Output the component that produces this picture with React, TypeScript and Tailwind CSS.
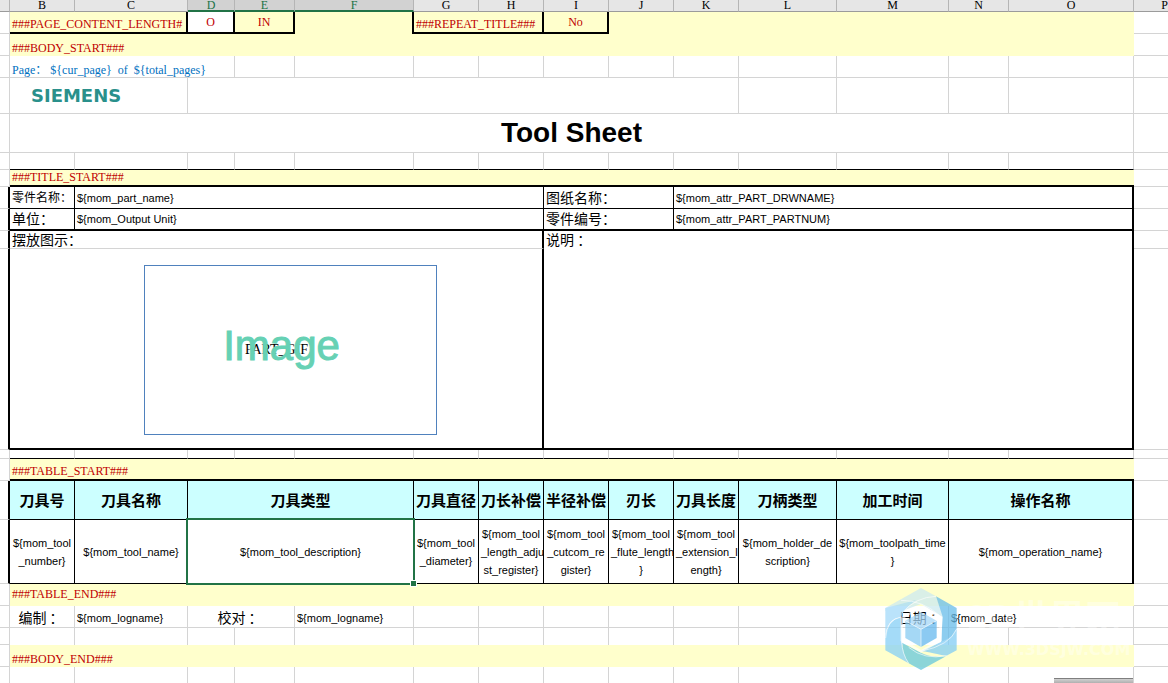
import type { ReactNode } from "react";

const GRID = "border-[#d4d4d4]";
const SERIF = "font-['Liberation_Serif','Noto_Sans_CJK_SC',serif]";
const TAG = `${SERIF} bg-[#ffffcc] pl-[2px] text-left text-[12px] text-[#c00000]`;
const FIELD = "px-[2px] font-['Liberation_Sans',sans-serif] text-[11px] leading-[18px] text-black";
const LABEL = "pl-[2px] font-['Noto_Sans_CJK_SC',sans-serif] font-normal text-black";
const CENTER = `${FIELD} border-r border-b border-black text-center`;

const columns = [
  { name: "", width: "w-[10px]" },
  { name: "B", width: "w-[65px]" },
  { name: "C", width: "w-[113px]" },
  { name: "D", width: "w-[47px]", selected: true },
  { name: "E", width: "w-[60px]", selected: true },
  { name: "F", width: "w-[119px]", selected: true },
  { name: "G", width: "w-[65px]" },
  { name: "H", width: "w-[65px]" },
  { name: "I", width: "w-[65px]" },
  { name: "J", width: "w-[65px]" },
  { name: "K", width: "w-[65px]" },
  { name: "L", width: "w-[98px]" },
  { name: "M", width: "w-[112px]" },
  { name: "N", width: "w-[60px]" },
  { name: "O", width: "w-[125px]" },
  { name: "P", width: "" },
];

const toolHeads = [
  { text: "刀具号", span: 1 },
  { text: "刀具名称", span: 1 },
  { text: "刀具类型", span: 3 },
  { text: "刀具直径", span: 1 },
  { text: "刀长补偿", span: 1 },
  { text: "半径补偿", span: 1 },
  { text: "刃长", span: 1 },
  { text: "刀具长度", span: 1 },
  { text: "刀柄类型", span: 1 },
  { text: "加工时间", span: 1 },
  { text: "操作名称", span: 2 },
];

function Row({ height, left, children }: { height: string; left?: string; children: ReactNode }) {
  return (
    <tr className={height}>
      <td className={left ?? `border-r border-b ${GRID}`} />
      {children}
      <td className={`border-b ${GRID}`} />
    </tr>
  );
}

function Blank({ count, last = "" }: { count: number; last?: string }) {
  return (
    <>
      {Array.from({ length: count }, (_, i) => (
        <td key={i} className={last || `border-r border-b ${GRID}`} />
      ))}
    </>
  );
}

function Lines({ parts }: { parts: string[] }) {
  return (
    <>
      {parts.map((part) => (
        <span key={part} className="block whitespace-nowrap">{part}</span>
      ))}
    </>
  );
}

function Watermark() {
  return (
    <div className="pointer-events-none absolute top-[588px] left-[885px] flex items-start gap-[10px]" aria-hidden="true">
      <svg viewBox="28 18 214 246" className="h-[82px] w-[72px] shrink-0">
        <g opacity="0.75">
          <path d="M28 78 L135 18 L180 43 Q120 50 75 92 Q90 70 28 88 Z" fill="#cdeaf0" />
          <path d="M76 88 Q115 50 180 43 L205 108 L135 66 Z" fill="#cdeaf0" />
          <path d="M180 43 L242 78 L242 140 Q232 170 195 186 L200 104 Z" fill="#68bdea" />
          <path d="M242 142 L242 205 L210 222 Q140 205 135 208 L195 180 Q232 166 242 142 Z" fill="#82cdf5" />
          <path d="M28 78 Q60 70 120 54 Q78 86 76 105 Q32 110 28 165 Z" fill="#a3dafa" />
          <path d="M28 165 Q35 112 76 106 L76 178 Q80 205 98 244 L28 205 Z" fill="#86cff6" />
          <path d="M78 182 L135 212 Q165 228 210 223 L135 264 L98 244 Q80 215 78 182 Z" fill="#66c8dc" />
          <path d="M135 90 L182 116 L135 142 L88 116 Z" fill="#a6d8f8" />
          <path d="M88 116 L135 142 L135 195 L88 168 Z" fill="#88cbf2" />
          <path d="M182 116 L135 142 L135 195 L182 168 Z" fill="#66b9ee" />
        </g>
        <g fill="none" stroke="#ffffff" strokeOpacity="0.6" strokeWidth="3">
          <path d="M75 55 Q140 55 190 100" />
          <path d="M180 43 Q120 45 78 92" />
          <path d="M76 105 Q32 112 29 168" />
          <path d="M77 178 Q78 215 98 244" />
          <path d="M98 196 Q145 235 212 221" />
          <path d="M135 208 Q222 190 241 142" />
          <path d="M88 116 L135 142 L182 116 M135 142 L135 195" />
          <path d="M135 76 L194 109 L194 175 L135 208 L77 175 L77 109 Z" strokeWidth="7" />
        </g>
      </svg>
      <div className="pt-[10px] font-['Liberation_Sans','Noto_Sans_CJK_SC',sans-serif] font-bold whitespace-nowrap text-white/40">
        <div className="text-[36px] leading-[42px]">3D世界网</div>
        <div className="font-['DejaVu_Sans',sans-serif] text-[16px] leading-[20px]">WWW.3DSJW.COM</div>
      </div>
    </div>
  );
}

export default function App() {
  return (
    <main lang="zh-CN" className="relative min-h-screen overflow-hidden bg-white">
      <table className="w-full table-fixed border-separate border-spacing-0">
        <colgroup>
          {columns.map((c, i) => (
            <col key={i} className={c.width} />
          ))}
        </colgroup>
        <thead>
          <tr className="h-[12px]">
            {columns.map((c, i) => (
              <th
                key={i}
                scope="col"
                className={
                  c.selected
                    ? "border-r border-b-2 border-r-[#b5b5b5] border-b-[#217346] bg-[#d2d2d2] text-center font-['Liberation_Serif',serif] text-[12px] leading-[10px] font-normal text-[#217346]"
                    : c.name === "P"
                      ? "border-b border-b-[#9b9b9b] bg-[#e6e6e6] text-right font-['Liberation_Serif',serif] text-[12px] leading-[11px] font-normal text-black"
                      : "border-r border-b border-r-[#b5b5b5] border-b-[#9b9b9b] bg-[#e6e6e6] text-center font-['Liberation_Serif',serif] text-[12px] leading-[11px] font-normal text-black"
                }
              >
                {c.name}
              </th>
            ))}
          </tr>
        </thead>
        <tbody>
          <Row height="h-[22px]">
            <td colSpan={2} className={`${TAG} overflow-hidden border-r-2 border-b-2 border-black align-bottom leading-[16px] whitespace-nowrap`}>
              ###PAGE_CONTENT_LENGTH#
            </td>
            <td className={`${SERIF} border-r-2 border-b-2 border-black bg-white text-center text-[12px] leading-[16px] text-[#c00000]`}>O</td>
            <td className={`${SERIF} border-r-2 border-b-2 border-black bg-[#ffffcc] text-center text-[12px] leading-[16px] text-[#c00000]`}>IN</td>
            <td className="border-r-2 border-black bg-[#ffffcc]" />
            <td colSpan={2} className={`${TAG} border-r-2 border-b-2 border-black align-bottom leading-[16px] whitespace-nowrap`}>###REPEAT_TITLE###</td>
            <td className={`${SERIF} border-r-2 border-b-2 border-black bg-[#ffffcc] text-center text-[12px] leading-[16px] text-[#c00000]`}>No</td>
            <td colSpan={6} className="bg-[#ffffcc]" />
          </Row>
          <Row height="h-[22px]">
            <td colSpan={14} className={`${TAG} align-bottom leading-[16px]`}>###BODY_START###</td>
          </Row>
          <Row height="h-[22px]">
            <td colSpan={3} className={`${SERIF} border-r border-b ${GRID} pl-[2px] align-bottom text-[12px] leading-[14px] whitespace-pre text-[#0070c0]`}>
              {"Page： ${cur_page}  of  ${total_pages}"}
            </td>
            <Blank count={11} />
          </Row>
          <Row height="h-[36px]">
            <td colSpan={2} className={`border-r border-b ${GRID} pl-[21px] font-['DejaVu_Sans',sans-serif] text-[18px] leading-[20px] font-bold text-[#2a908b]`}>
              SIEMENS
            </td>
            <td colSpan={8} className={`border-r border-b ${GRID}`} />
            <Blank count={4} />
          </Row>
          <Row height="h-[39px]">
            <td colSpan={14} className={`border-r border-b ${GRID} text-center font-['Liberation_Sans',sans-serif] font-bold text-black`}>
              <h1 className="text-[28px] leading-[32px]">Tool Sheet</h1>
            </td>
          </Row>
          <Row height="h-[17px]">
            <Blank count={14} last="border-r border-b border-r-[#d4d4d4] border-b-black" />
          </Row>
          <Row height="h-[17px]">
            <td colSpan={14} className={`${TAG} border-b-2 border-black align-bottom leading-[15px]`}>###TITLE_START###</td>
          </Row>
          <Row height="h-[22px]" left="border-r-2 border-b border-r-black border-b-[#d4d4d4]">
            <th scope="row" className={`${LABEL} border-r border-b border-black pb-[2px] text-left text-[12px] leading-[18px] whitespace-nowrap`}>零件名称：</th>
            <td colSpan={6} className={`${FIELD} border-r border-b border-black`}>{"${mom_part_name}"}</td>
            <th scope="row" colSpan={2} className={`${LABEL} border-r border-b border-black pb-[2px] text-left text-[14px] leading-[18px]`}>图纸名称：</th>
            <td colSpan={5} className={`${FIELD} border-r-2 border-b border-black`}>{"${mom_attr_PART_DRWNAME}"}</td>
          </Row>
          <Row height="h-[22px]" left="border-r-2 border-b border-r-black border-b-[#d4d4d4]">
            <th scope="row" className={`${LABEL} border-r border-b-2 border-black pb-[2px] text-left text-[14px] leading-[18px]`}>单位：</th>
            <td colSpan={6} className={`${FIELD} border-r border-b-2 border-black`}>{"${mom_Output Unit}"}</td>
            <th scope="row" colSpan={2} className={`${LABEL} border-r border-b-2 border-black pb-[2px] text-left text-[14px] leading-[18px]`}>零件编号：</th>
            <td colSpan={5} className={`${FIELD} border-r-2 border-b-2 border-black`}>{"${mom_attr_PART_PARTNUM}"}</td>
          </Row>
          <Row height="h-[18px]" left="border-r-2 border-b border-r-black border-b-[#d4d4d4]">
            <td colSpan={7} className={`${LABEL} border-r-2 border-b border-r-black border-b-[#d4d4d4] align-top text-[14px] leading-[17px]`}>摆放图示：</td>
            <td colSpan={7} rowSpan={2} className={`${LABEL} border-r-2 border-b-2 border-black align-top text-[14px] leading-[17px]`}>说明 ：</td>
          </Row>
          <Row height="h-[201px]" left="border-r-2 border-b border-r-black border-b-[#d4d4d4]">
            <td colSpan={7} className="border-r-2 border-b-2 border-black pt-[16px] pl-[134px] align-top">
              <div className="grid h-[170px] w-[293px] place-items-center border border-[#4f81bd]">
                <span className={`${SERIF} col-start-1 row-start-1 pr-[28px] text-[14px] leading-[18px] text-black`}>PART_GIF</span>
                <span className="z-10 col-start-1 row-start-1 pr-[18px] pb-[8px] font-['Liberation_Sans',sans-serif] text-[42px] leading-[48px] text-[#66d1b4] [-webkit-text-stroke:1px_#66d1b4]">
                  Image
                </span>
              </div>
            </td>
          </Row>
          <Row height="h-[9px]">
            <Blank count={14} last="border-r border-b border-r-[#d4d4d4] border-b-black" />
          </Row>
          <Row height="h-[22px]">
            <td colSpan={14} className={`${TAG} border-b-2 border-black align-bottom leading-[16px]`}>###TABLE_START###</td>
          </Row>
          <Row height="h-[39px]" left="border-r-2 border-b border-r-black border-b-[#d4d4d4]">
            {toolHeads.map((h, i) => (
              <th
                key={h.text}
                scope="col"
                colSpan={h.span}
                className={
                  i === toolHeads.length - 1
                    ? "border-r-2 border-b border-black bg-[#ccffff] text-center font-['Noto_Sans_CJK_SC',sans-serif] text-[15px] leading-[20px] font-bold whitespace-nowrap text-black"
                    : "border-r border-b border-black bg-[#ccffff] text-center font-['Noto_Sans_CJK_SC',sans-serif] text-[15px] leading-[20px] font-bold whitespace-nowrap text-black"
                }
              >
                {h.text}
              </th>
            ))}
          </Row>
          <Row height="h-[64px]" left="border-r-2 border-b border-r-black border-b-[#d4d4d4]">
            <td className={CENTER}><Lines parts={["${mom_tool", "_number}"]} /></td>
            <td className={CENTER}>{"${mom_tool_name}"}</td>
            <td colSpan={3} className={`${CENTER} relative`}>
              {"${mom_tool_description}"}
              <span className="absolute -inset-[2px] z-10 border-2 border-[#217346]" />
              <span className="absolute -right-[4px] -bottom-[4px] z-20 h-[7px] w-[7px] border border-white bg-[#217346]" />
            </td>
            <td className={CENTER}><Lines parts={["${mom_tool", "_diameter}"]} /></td>
            <td className={CENTER}><Lines parts={["${mom_tool", "_length_adju", "st_register}"]} /></td>
            <td className={CENTER}><Lines parts={["${mom_tool", "_cutcom_re", "gister}"]} /></td>
            <td className={CENTER}><Lines parts={["${mom_tool", "_flute_length", "}"]} /></td>
            <td className={CENTER}><Lines parts={["${mom_tool", "_extension_l", "ength}"]} /></td>
            <td className={CENTER}><Lines parts={["${mom_holder_de", "scription}"]} /></td>
            <td className={CENTER}><Lines parts={["${mom_toolpath_time", "}"]} /></td>
            <td colSpan={2} className={`${FIELD} border-r-2 border-b border-black text-center`}>{"${mom_operation_name}"}</td>
          </Row>
          <Row height="h-[22px]">
            <td colSpan={14} className={`${TAG} align-top leading-[20px]`}>###TABLE_END###</td>
          </Row>
          <Row height="h-[22px]">
            <th scope="row" className={`${LABEL} border-r border-b ${GRID} pr-[4px] text-center text-[14px] leading-[20px]`}>编制 ：</th>
            <td className={`${FIELD} border-r border-b ${GRID} pt-[2px]`}>{"${mom_logname}"}</td>
            <th scope="row" colSpan={2} className={`${LABEL} border-r border-b ${GRID} pr-[4px] text-center text-[14px] leading-[20px]`}>校对 ：</th>
            <td className={`${FIELD} border-r border-b ${GRID} pt-[2px]`}>{"${mom_logname}"}</td>
            <Blank count={5} />
            <th scope="row" colSpan={2} className={`${LABEL} border-r border-b ${GRID} pr-[4px] text-right text-[14px] leading-[20px]`}>日期 ：</th>
            <td colSpan={2} className={`${FIELD} border-r border-b ${GRID} pt-[2px]`}>{"${mom_date}"}</td>
          </Row>
          <Row height="h-[17px]">
            <Blank count={14} last="border-r border-[#d4d4d4]" />
          </Row>
          <Row height="h-[22px]">
            <td colSpan={14} className={`${TAG} align-bottom leading-[16px]`}>###BODY_END###</td>
          </Row>
          <Row height="h-[17px]">
            <Blank count={13} last="border-r border-[#d4d4d4]" />
            <td className="border-r border-[#d4d4d4] align-bottom">
              <div className="ml-auto h-[6px] w-[79px] border-t border-[#7f7f7f] bg-linear-to-b from-[#d0d0d0] to-[#a8a8a8]" />
            </td>
          </Row>
        </tbody>
      </table>
      <Watermark />
    </main>
  );
}
